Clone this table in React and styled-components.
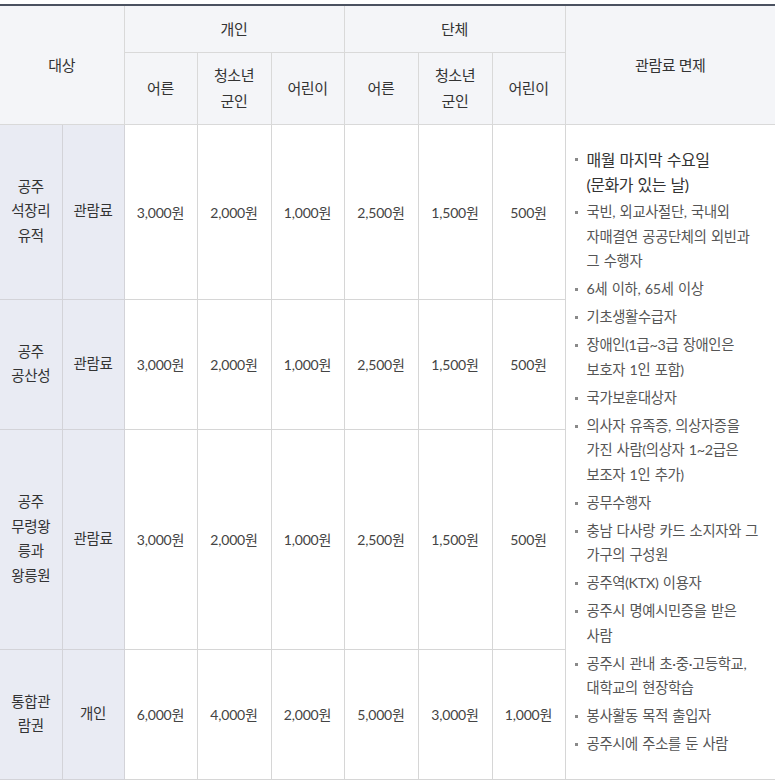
import React from 'react';
import styled, { createGlobalStyle } from 'styled-components';

const GlobalStyle = createGlobalStyle`
  body {
    margin: 0;
    background: #fff;
    font-family: Lato, "Noto Sans CJK KR", sans-serif;
  }
`;

const Wrap = styled.div`
  padding-top: 4px;
`;

const Table = styled.table`
  width: 775px;
  table-layout: fixed;
  border-collapse: collapse;
  border-top: 2px solid #4b5260;
  border-bottom: 1px solid #cfcfcf;
  border-left: hidden;
  border-right: hidden;
  font-size: 14px;
  color: #444;
`;

const Row = styled.tr`
  height: ${(p) => p.$h}px;
`;

const HeadCell = styled.th`
  background: #f4f5f8;
  font-weight: normal;
  font-size: 15px;
  letter-spacing: -0.4px;
  color: #333;
  border: 1px solid #d9d9d9;
  line-height: 26px;
  padding: 0;
  text-align: center;
  vertical-align: middle;
`;

const LabelCell = styled.td`
  background: #e9ebf3;
  color: #333;
  font-size: 14.5px;
  letter-spacing: -0.3px;
  border: 1px solid #d3d3d8;
  line-height: 24.5px;
  text-align: center;
  vertical-align: middle;
  padding: 0;
`;

const PriceCell = styled.td`
  background: #fff;
  color: #444;
  border: 1px solid #d6d6d6;
  text-align: center;
  vertical-align: middle;
  padding: 0;
  letter-spacing: -0.2px;
`;

const NoteCell = styled.td`
  background: #fff;
  border: 1px solid #d6d6d6;
  vertical-align: middle;
  padding: 0 4px 0 9px;
`;

const NoteList = styled.ul`
  list-style: none;
  margin: 0;
  padding: 0;
`;

const NoteItem = styled.li`
  display: flex;
  align-items: flex-start;
  font-size: ${(p) => (p.$lead ? '16px' : '14.3px')};
  line-height: ${(p) => (p.$lead ? '25px' : '24.5px')};
  letter-spacing: ${(p) => (p.$lead ? '-0.5px' : '-0.3px')};
  color: ${(p) => (p.$lead ? '#333' : '#555')};
  word-spacing: 1px;
  white-space: nowrap;

  & + & {
    margin-top: 3.5px;
  }
`;

const Dot = styled.span`
  flex: none;
  width: 3px;
  height: 3px;
  margin: 11px 9px 0 0;
  background: #8a8a8a;
`;

const cols = [62, 62, 73, 74, 73, 74, 74, 73, 210];

const sites = [
  { name: ['공주', '석장리', '유적'], kind: '관람료', prices: ['3,000원', '2,000원', '1,000원', '2,500원', '1,500원', '500원'], h: 175 },
  { name: ['공주', '공산성'], kind: '관람료', prices: ['3,000원', '2,000원', '1,000원', '2,500원', '1,500원', '500원'], h: 130 },
  { name: ['공주', '무령왕', '릉과', '왕릉원'], kind: '관람료', prices: ['3,000원', '2,000원', '1,000원', '2,500원', '1,500원', '500원'], h: 220 },
  { name: ['통합관', '람권'], kind: '개인', prices: ['6,000원', '4,000원', '2,000원', '5,000원', '3,000원', '1,000원'], h: 130 },
];

const notes = [
  ['국빈, 외교사절단, 국내외', '자매결연 공공단체의 외빈과', '그 수행자'],
  ['6세 이하, 65세 이상'],
  ['기초생활수급자'],
  ['장애인(1급~3급 장애인은', '보호자 1인 포함)'],
  ['국가보훈대상자'],
  ['의사자 유족증, 의상자증을', '가진 사람(의상자 1~2급은', '보조자 1인 추가)'],
  ['공무수행자'],
  ['충남 다사랑 카드 소지자와 그', '가구의 구성원'],
  ['공주역(KTX) 이용자'],
  ['공주시 명예시민증을 받은', '사람'],
  ['공주시 관내 초·중·고등학교,', '대학교의 현장학습'],
  ['봉사활동 목적 출입자'],
  ['공주시에 주소를 둔 사람'],
];

const Lines = ({ parts }) =>
  parts.map((p, i) => (
    <React.Fragment key={i}>
      {i > 0 && <br />}
      {p}
    </React.Fragment>
  ));

export default function App() {
  return (
    <Wrap>
      <GlobalStyle />
      <Table>
        <colgroup>
          {cols.map((w, i) => (
            <col key={i} style={{ width: w }} />
          ))}
        </colgroup>
        <thead>
          <Row $h={47}>
            <HeadCell colSpan={2} rowSpan={2}>대상</HeadCell>
            <HeadCell colSpan={3}>개인</HeadCell>
            <HeadCell colSpan={3}>단체</HeadCell>
            <HeadCell rowSpan={2}>관람료 면제</HeadCell>
          </Row>
          <Row $h={72}>
            {[0, 1].map((g) => (
              <React.Fragment key={g}>
                <HeadCell>어른</HeadCell>
                <HeadCell>
                  <Lines parts={['청소년', '군인']} />
                </HeadCell>
                <HeadCell>어린이</HeadCell>
              </React.Fragment>
            ))}
          </Row>
        </thead>
        <tbody>
          {sites.map((s, i) => (
            <Row $h={s.h} key={i}>
              <LabelCell>
                <Lines parts={s.name} />
              </LabelCell>
              <LabelCell>{s.kind}</LabelCell>
              {s.prices.map((p, j) => (
                <PriceCell key={j}>{p}</PriceCell>
              ))}
              {i === 0 && (
                <NoteCell rowSpan={4}>
                  <NoteList>
                    <NoteItem $lead>
                      <Dot />
                      <span>
                        <Lines parts={['매월 마지막 수요일', '(문화가 있는 날)']} />
                      </span>
                    </NoteItem>
                    {notes.map((n, k) => (
                      <NoteItem key={k}>
                        <Dot />
                        <span>
                          <Lines parts={n} />
                        </span>
                      </NoteItem>
                    ))}
                  </NoteList>
                </NoteCell>
              )}
            </Row>
          ))}
        </tbody>
      </Table>
    </Wrap>
  );
}
